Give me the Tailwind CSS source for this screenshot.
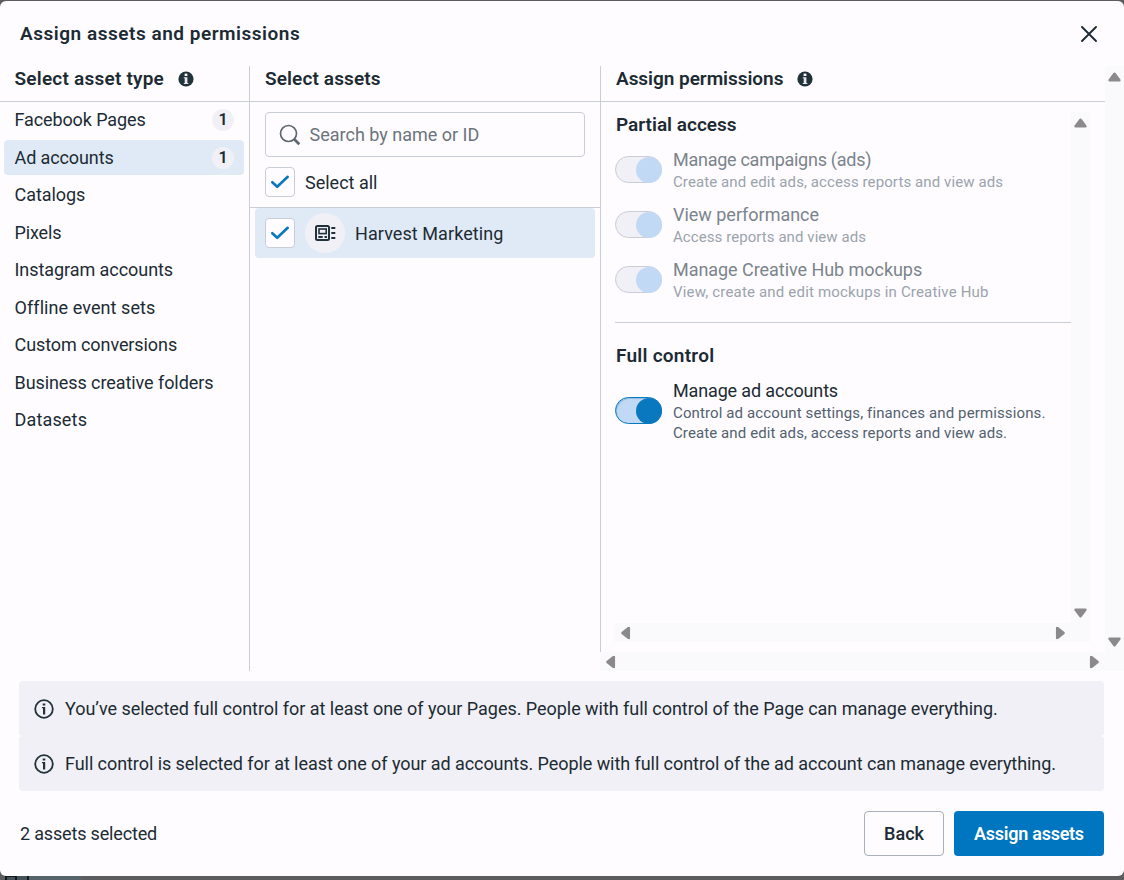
<!DOCTYPE html>
<html lang="en">
<head>
  <meta charset="UTF-8" />
  <meta name="viewport" content="width=device-width, initial-scale=1.0"/>
  <title>Assign assets and permissions</title>

  <!-- Tailwind CSS -->
  <script src="https://cdn.jsdelivr.net/npm/@tailwindcss/browser@4"></script>
</head>
<body class="bg-[#5c5c5e] font-[Roboto,sans-serif] text-[18px] leading-6 text-[#1c2b33] h-[880px] overflow-hidden pt-px whitespace-nowrap">

  <!-- Icons -->
  <svg class="hidden">
    <symbol id="info" viewBox="0 0 16 16">
      <circle cx="8" cy="8" r="7.6" fill="#22323b"/>
      <rect x="6.6" y="2.6" width="2.8" height="2.4" fill="#fefcff"/>
      <path d="M5.8 6.2h3.6v5.7h.9v1H5.8v-1h.9V7.2h-.9z" fill="#fefcff" fill-opacity=".9"/>
    </symbol>
    <symbol id="info-outline" viewBox="0 0 20 20">
      <circle cx="10" cy="10" r="8.8" fill="none" stroke="#22323b" stroke-width="1.8"/>
      <rect x="8.7" y="4.5" width="2.6" height="2" fill="#22323b"/>
      <path d="M8 8h3.2v7.5H9V9.2H8z" fill="#22323b"/>
    </symbol>
    <symbol id="check" viewBox="0 0 20 16">
      <path d="M2.3 8.2l4.9 4.6L17.7 2.8" fill="none" stroke="#0a78be" stroke-width="2.6" stroke-linejoin="round" stroke-linecap="round"/>
    </symbol>
    <symbol id="arrow" viewBox="0 0 13 10">
      <path d="M5.4 1.1Q6.5 0 7.6 1.1L12.4 7.4Q13.2 9.6 11.4 9.6H1.6Q-.2 9.6.6 7.4z" fill="#8b898c"/>
    </symbol>
  </svg>

  <div class="bg-[#fefcff] h-[875px] rounded-md flex flex-col overflow-hidden">

    <!-- Header -->
    <header class="h-[65px] shrink-0 flex justify-between items-center pl-5 pr-[27px]">
      <h1 class="text-[19px] font-semibold tracking-[0.52px]">Assign assets and permissions</h1>
      <svg class="size-4" viewBox="0 0 16 16"><path d="M1 1l14 14M15 1L1 15" stroke="#1c2b33" stroke-width="1.9" stroke-linecap="round"/></svg>
    </header>

    <!-- Columns -->
    <div class="flex h-[605px] shrink-0">

      <!-- Asset types -->
      <aside class="w-[250px] border-r border-[#c9cdd8]">
        <div class="h-9 border-b border-[#c9cdd8] flex items-center pl-[14.5px] pb-2.5 pt-0">
          <h2 class="text-[19px] font-semibold tracking-[0.22px]">Select asset type</h2>
          <svg class="size-4 ml-[14px]"><use href="#info"/></svg>
        </div>
        <ul class="pt-[0.5px] pl-1 pr-[5px] flex flex-col gap-[2.5px]">
          <li class="h-[35px] rounded pl-[10.5px] pr-2.5 flex items-center justify-between"><span class="tracking-[-0.11px]">Facebook Pages</span><span class="size-[22px] rounded-full bg-[#f1f0f6] flex items-center justify-center text-[16px] font-semibold">1</span></li>
          <li class="h-[35px] rounded pl-[10.5px] pr-2.5 flex items-center justify-between bg-[#e0eaf6]"><span class="tracking-[-0.11px]">Ad accounts</span><span class="size-[22px] rounded-full bg-[#f1f0f6] flex items-center justify-center text-[16px] font-semibold">1</span></li>
          <li class="h-[35px] pl-[10.5px] flex items-center tracking-[-0.05px]">Catalogs</li>
          <li class="h-[35px] pl-[10.5px] flex items-center tracking-[-0.15px]">Pixels</li>
          <li class="h-[35px] pl-[10.5px] flex items-center tracking-[-0.06px]">Instagram accounts</li>
          <li class="h-[35px] pl-[10.5px] flex items-center tracking-[0.08px]">Offline event sets</li>
          <li class="h-[35px] pl-[10.5px] flex items-center tracking-[-0.09px]">Custom conversions</li>
          <li class="h-[35px] pl-[10.5px] flex items-center tracking-[-0.08px]">Business creative folders</li>
          <li class="h-[35px] pl-[10.5px] flex items-center tracking-[0.16px]">Datasets</li>
        </ul>
      </aside>

      <!-- Assets -->
      <section class="w-[350px]">
        <div class="h-9 border-b border-[#c9cdd8] pl-[15px] flex items-center pb-2.5">
          <h2 class="text-[19px] font-semibold tracking-[0.12px]">Select assets</h2>
        </div>
        <div class="h-[106px] border-b border-[#c9cdd8] px-[15px] pt-2.5">
          <div class="h-[45px] border border-[#c9cdd8] rounded flex items-center pl-[13px]">
            <svg class="size-[22px] mr-[8.5px]" viewBox="0 0 22 22" fill="none" stroke="#5f676d"><circle cx="9.5" cy="9.5" r="8" stroke-width="1.7"/><path d="M15.3 15.3l5 5" stroke-width="2.7"/></svg>
            <span class="text-[#6b747b]">Search by name or ID</span>
          </div>
          <div class="flex items-center mt-2.5">
            <span class="size-[30px] border border-[#c9cdd8] rounded flex items-center justify-center bg-[#fefcff]"><svg class="w-5 h-4"><use href="#check"/></svg></span>
            <span class="ml-2.5 pt-0.5">Select all</span>
          </div>
        </div>
        <div class="h-[50px] mx-[5px] pl-2.5 rounded bg-[#e0eaf6] flex items-center">
          <span class="size-[30px] border border-[#c9cdd8] rounded flex items-center justify-center bg-[#fefcff]"><svg class="w-5 h-4"><use href="#check"/></svg></span>
          <span class="size-10 ml-2.5 rounded-full bg-[#f1f0f6] flex items-center justify-center">
            <svg class="w-[21px] h-4" viewBox="0 0 21 16" fill="none" stroke="#22323b">
              <rect x="1" y="1" width="13" height="14" rx="1.5" stroke-width="2"/>
              <rect x="4" y="4" width="7.2" height="4.6" stroke-width="1.6"/>
              <path d="M3.3 12h4.4M9.5 12H12" stroke-width="2"/>
              <path d="M16.3 3h4M16.3 8h4M16.3 13h4" stroke-width="1.8"/>
            </svg>
          </span>
          <span class="ml-2.5 pt-0.5 tracking-[0.08px]">Harvest Marketing</span>
        </div>
      </section>

      <!-- Permissions -->
      <section class="w-[505px] flex flex-col">
        <div class="h-[586px] border-l border-[#c9cdd8]">
          <div class="h-9 border-b border-[#c9cdd8] pl-[15px] flex items-center pb-2.5">
            <h2 class="text-[19px] font-semibold tracking-[-0.04px]">Assign permissions</h2>
            <svg class="size-4 ml-[14px]"><use href="#info"/></svg>
          </div>
          <div class="mt-2.5 ml-[13px] w-[476px]">
            <div class="flex h-[511px]">
              <div class="w-[457px] pl-px">
                <h3 class="text-[19px] font-semibold pl-px pt-px mb-[11px]">Partial access</h3>
                <div class="flex h-[55px] gap-[11px]">
                  <span class="w-[47px] h-[27px] mt-2 rounded-full border border-[#c9cdd8] bg-[#f1f0f6] flex justify-end items-center shrink-0"><span class="size-[26px] -mr-px rounded-full bg-[#c2d9f5]"></span></span>
                  <div>
                    <p class="text-[#7b848b] tracking-[-0.27px]">Manage campaigns (ads)</p>
                    <p class="text-[15px] leading-5 text-[#9ba3ad] tracking-[0.1px]">Create and edit ads, access reports and view ads</p>
                  </div>
                </div>
                <div class="flex h-[55px] gap-[11px]">
                  <span class="w-[47px] h-[27px] mt-2 rounded-full border border-[#c9cdd8] bg-[#f1f0f6] flex justify-end items-center shrink-0"><span class="size-[26px] -mr-px rounded-full bg-[#c2d9f5]"></span></span>
                  <div>
                    <p class="text-[#7b848b] tracking-[-0.02px]">View performance</p>
                    <p class="text-[15px] leading-5 text-[#9ba3ad] tracking-[0.07px]">Access reports and view ads</p>
                  </div>
                </div>
                <div class="flex h-[55px] gap-[11px]">
                  <span class="w-[47px] h-[27px] mt-2 rounded-full border border-[#c9cdd8] bg-[#f1f0f6] flex justify-end items-center shrink-0"><span class="size-[26px] -mr-px rounded-full bg-[#c2d9f5]"></span></span>
                  <div>
                    <p class="text-[#7b848b] tracking-[-0.05px]">Manage Creative Hub mockups</p>
                    <p class="text-[15px] leading-5 text-[#9ba3ad] tracking-[0.18px]">View, create and edit mockups in Creative Hub</p>
                  </div>
                </div>
                <div class="border-t border-[#c9cdd8] mt-[9px] pt-[21px]">
                  <h3 class="text-[19px] font-semibold pl-px tracking-[0.25px] mb-[11px]">Full control</h3>
                  <div class="flex gap-[11px]">
                    <span class="w-[47px] h-[27px] mt-[18px] rounded-full border border-[#0a78be] bg-[#c2d9f5] shadow-[inset_1px_1px_1px_#8fbce4] flex justify-end items-center shrink-0"><span class="size-[26px] -mr-px rounded-full bg-[#0a78be]"></span></span>
                    <div>
                      <p class="tracking-[-0.15px]">Manage ad accounts</p>
                      <p class="text-[15px] leading-5 text-[#52616e] tracking-[0.12px]">Control ad account settings, finances and permissions.</p>
                      <p class="text-[15px] leading-5 text-[#52616e] tracking-[0.1px]">Create and edit ads, access reports and view ads.</p>
                    </div>
                  </div>
                </div>
              </div>
              <div class="w-[19px] bg-[#faf9fb] flex flex-col justify-between items-center py-[5px]">
                <svg class="w-[13px] h-2.5 mt-px"><use href="#arrow"/></svg>
                <svg class="w-[13px] h-2.5 rotate-180"><use href="#arrow"/></svg>
              </div>
            </div>
            <div class="h-[19px] bg-[#faf9fb] flex justify-between items-center pl-[5px] pr-[23px]">
              <svg class="w-[13px] h-2.5 -rotate-90"><use href="#arrow"/></svg>
              <svg class="w-[13px] h-2.5 rotate-90"><use href="#arrow"/></svg>
            </div>
          </div>
        </div>
        <div class="h-[19px] bg-[#faf9fb] flex justify-between items-center px-1">
          <svg class="w-[13px] h-2.5 -rotate-90"><use href="#arrow"/></svg>
          <svg class="w-[13px] h-2.5 rotate-90"><use href="#arrow"/></svg>
        </div>
      </section>

      <div class="w-[19px] bg-[#faf9fb] flex flex-col justify-between items-center pt-1.5 pb-6">
        <svg class="w-[13px] h-2.5"><use href="#arrow"/></svg>
        <svg class="w-[13px] h-2.5 rotate-180"><use href="#arrow"/></svg>
      </div>
    </div>

    <!-- Notices -->
    <div class="mt-2.5 ml-[19px] mr-5">
      <div class="h-[55px] rounded bg-[#f1f0f6] flex items-center pl-[15px] gap-[11px]">
        <svg class="size-5"><use href="#info-outline"/></svg>
        <p class="tracking-[-0.035px]">You’ve selected full control for at least one of your Pages. People with full control of the Page can manage everything.</p>
      </div>
      <div class="h-[55px] rounded bg-[#f1f0f6] flex items-center pl-[15px] gap-[11px]">
        <svg class="size-5"><use href="#info-outline"/></svg>
        <p class="tracking-[-0.06px]">Full control is selected for at least one of your ad accounts. People with full control of the ad account can manage everything.</p>
      </div>
    </div>

    <!-- Footer -->
    <footer class="mt-5 h-[45px] pl-5 pr-5 flex items-center gap-2.5">
      <p class="mr-auto tracking-[-0.17px]">2 assets selected</p>
      <button class="w-20 h-[45px] border border-[#a7b0bb] rounded font-medium">Back</button>
      <button class="w-[150px] h-[45px] bg-[#0076c0] text-white rounded font-semibold tracking-[-0.26px]">Assign assets</button>
    </footer>
  </div>

  <!-- Dimmed page behind the dialog -->
  <div class="flex h-1 pl-[5px]">
    <span class="w-3 border-x-2 border-t border-[#14181c] bg-[#46525a]"></span>
    <span class="w-3 border-r-2 border-[#14181c] bg-[#46525a]"></span>
    <span class="w-[52px] bg-[#56636b]"></span>
  </div>
</body>
</html>
